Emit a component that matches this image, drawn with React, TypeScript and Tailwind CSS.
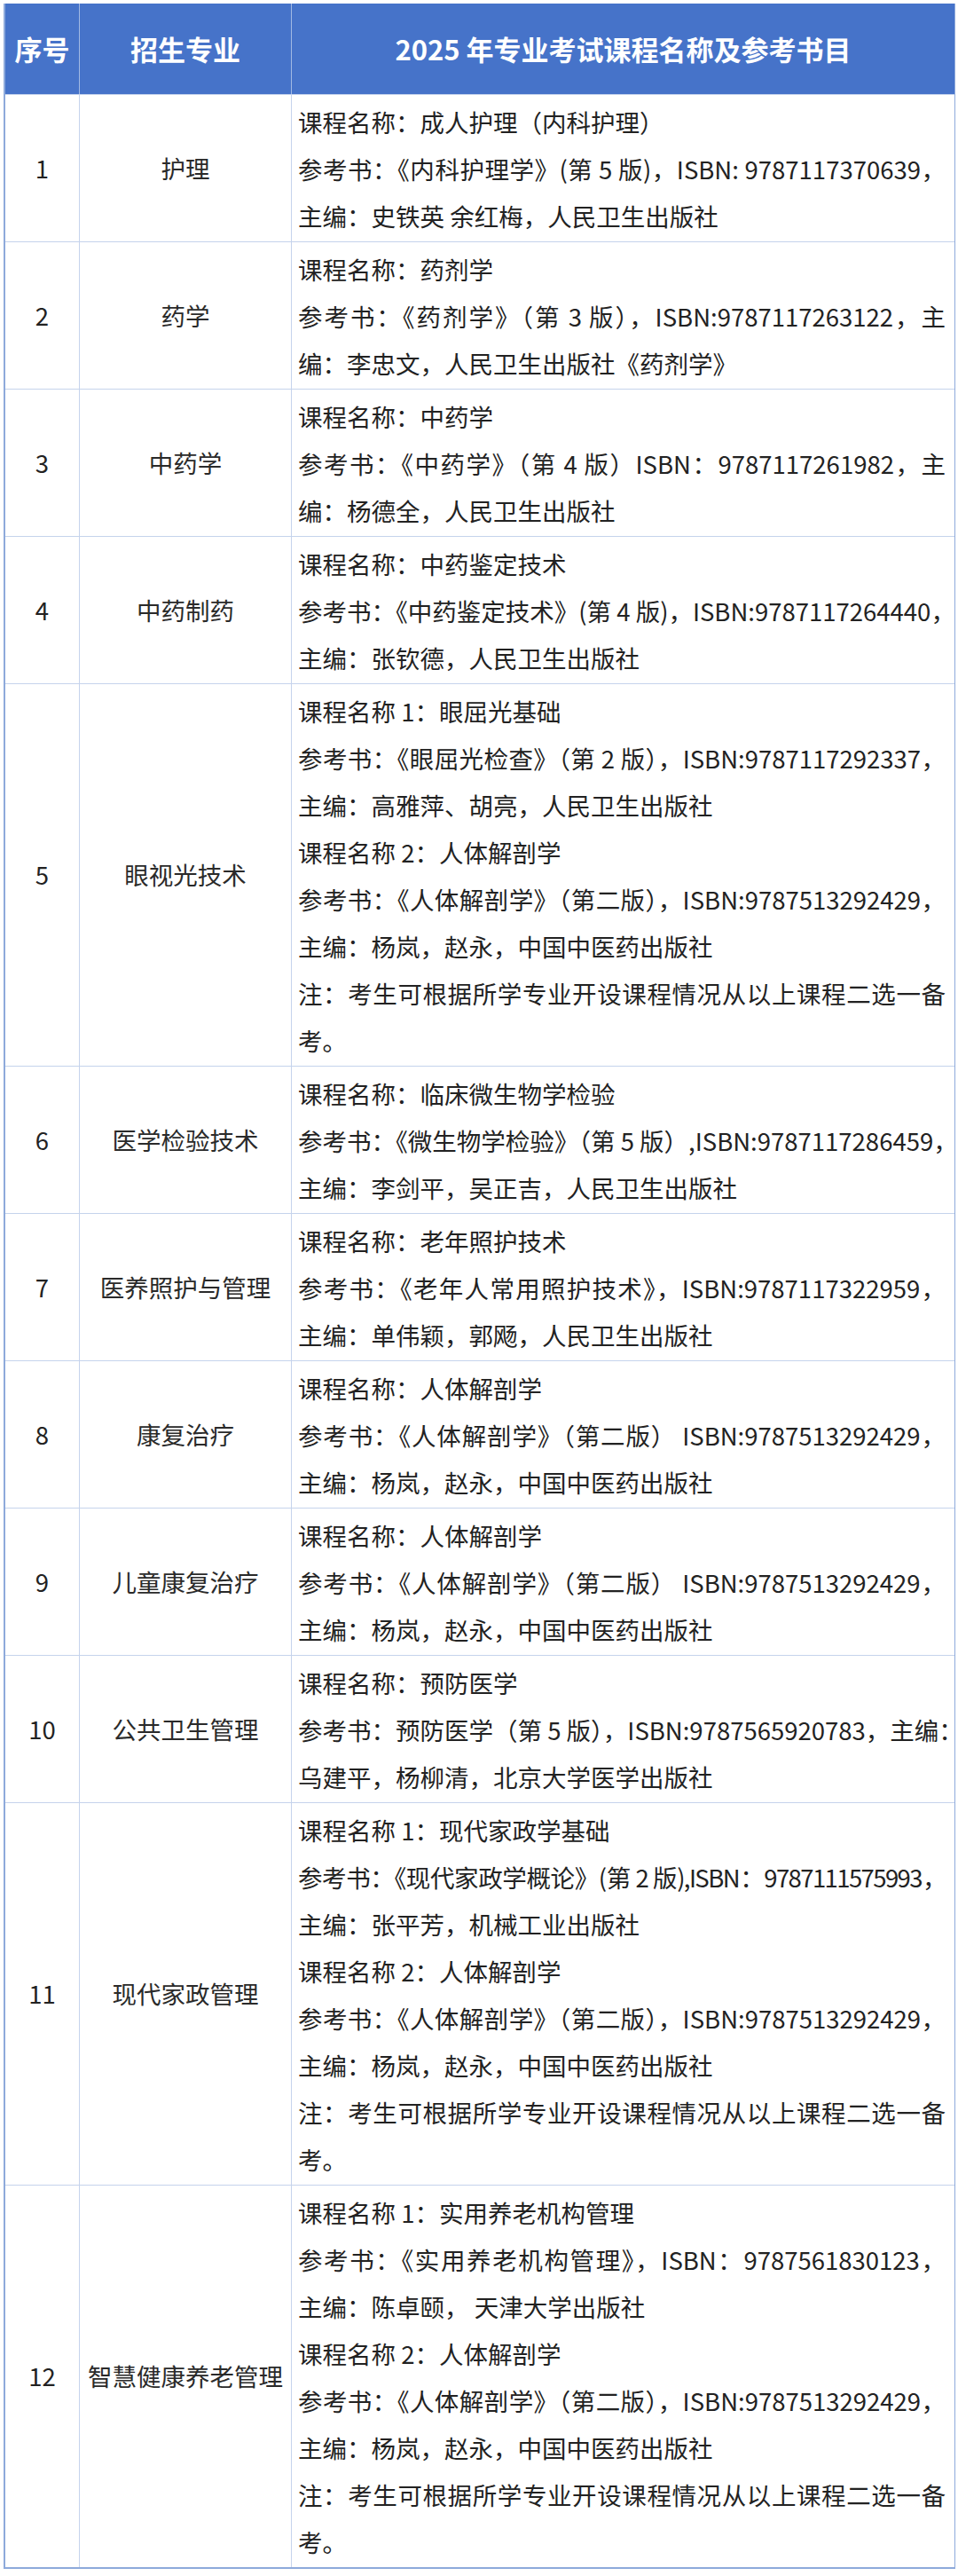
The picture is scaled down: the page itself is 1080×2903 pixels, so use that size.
import React from 'react';

type Line = { t: string; j?: boolean; tight?: boolean };

interface Row {
  no: string;
  major: string;
  lines: Line[];
}

const anatomy: Line[] = [
  { t: '课程名称 2：人体解剖学' },
  { t: '参考书：《人体解剖学》（第二版），ISBN:9787513292429，', j: true },
  { t: '主编：杨岚，赵永，中国中医药出版社' },
  { t: '注：考生可根据所学专业开设课程情况从以上课程二选一备', j: true },
  { t: '考。' },
];

const anatomySingle: Line[] = [
  { t: '课程名称：人体解剖学' },
  { t: '参考书：《人体解剖学》（第二版） ISBN:9787513292429，', j: true },
  { t: '主编：杨岚，赵永，中国中医药出版社' },
];

const rows: Row[] = [
  {
    no: '1',
    major: '护理',
    lines: [
      { t: '课程名称：成人护理（内科护理）' },
      { t: '参考书：《内科护理学》(第 5 版)，ISBN: 9787117370639，', j: true },
      { t: '主编：史铁英  余红梅，人民卫生出版社' },
    ],
  },
  {
    no: '2',
    major: '药学',
    lines: [
      { t: '课程名称：药剂学' },
      { t: '参考书：《药剂学》（第 3 版），ISBN:9787117263122，主', j: true },
      { t: '编：李忠文，人民卫生出版社《药剂学》' },
    ],
  },
  {
    no: '3',
    major: '中药学',
    lines: [
      { t: '课程名称：中药学' },
      { t: '参考书：《中药学》（第 4 版）ISBN：9787117261982，主', j: true },
      { t: '编：杨德全，人民卫生出版社' },
    ],
  },
  {
    no: '4',
    major: '中药制药',
    lines: [
      { t: '课程名称：中药鉴定技术' },
      { t: '参考书：《中药鉴定技术》(第 4 版)，ISBN:9787117264440，', j: true },
      { t: '主编：张钦德，人民卫生出版社' },
    ],
  },
  {
    no: '5',
    major: '眼视光技术',
    lines: [
      { t: '课程名称 1：眼屈光基础' },
      { t: '参考书：《眼屈光检查》（第 2 版），ISBN:9787117292337，', j: true },
      { t: '主编：高雅萍、胡亮，人民卫生出版社' },
      ...anatomy,
    ],
  },
  {
    no: '6',
    major: '医学检验技术',
    lines: [
      { t: '课程名称：临床微生物学检验' },
      { t: '参考书：《微生物学检验》（第 5 版）,ISBN:9787117286459，', j: true },
      { t: '主编：李剑平，吴正吉，人民卫生出版社' },
    ],
  },
  {
    no: '7',
    major: '医养照护与管理',
    lines: [
      { t: '课程名称：老年照护技术' },
      { t: '参考书：《老年人常用照护技术》，ISBN:9787117322959，', j: true },
      { t: '主编：单伟颖，郭飏，人民卫生出版社' },
    ],
  },
  { no: '8', major: '康复治疗', lines: anatomySingle },
  { no: '9', major: '儿童康复治疗', lines: anatomySingle },
  {
    no: '10',
    major: '公共卫生管理',
    lines: [
      { t: '课程名称：预防医学' },
      { t: '参考书：预防医学（第 5 版），ISBN:9787565920783，主编：', j: true },
      { t: '乌建平，杨柳清，北京大学医学出版社' },
    ],
  },
  {
    no: '11',
    major: '现代家政管理',
    lines: [
      { t: '课程名称 1：现代家政学基础' },
      { t: '参考书：《现代家政学概论》(第 2 版),ISBN：9787111575993，', j: true, tight: true },
      { t: '主编：张平芳，机械工业出版社' },
      ...anatomy,
    ],
  },
  {
    no: '12',
    major: '智慧健康养老管理',
    lines: [
      { t: '课程名称 1：实用养老机构管理' },
      { t: '参考书：《实用养老机构管理》，ISBN：9787561830123，', j: true },
      { t: '主编：陈卓颐， 天津大学出版社' },
      ...anatomy,
    ],
  },
];

const font = { fontFamily: '"Noto Sans CJK SC", "Noto Sans", sans-serif' };

function lineClass(line: Line) {
  if (line.tight) return 'whitespace-nowrap tracking-[-1.6px] [text-align-last:justify] text-justify';
  if (line.j) return 'whitespace-nowrap [text-align-last:justify] text-justify';
  return 'whitespace-nowrap';
}

export default function App() {
  return (
    <div className="min-h-screen bg-white pl-[4px] pt-[4px]" style={font}>
      <div className="w-[1073px] border-b-2 border-l-2 border-r border-[#8eaadb]">
        {/* header */}
        <div className="grid h-[102px] grid-cols-[84px_239px_minmax(0,1fr)] bg-[#4673c9] text-[31px] font-bold text-white">
          <div className="flex items-center justify-center border-r border-[#a3b9e4]">序号</div>
          <div className="flex items-center justify-center border-r border-[#a3b9e4]">招生专业</div>
          <div className="flex items-center justify-center">2025 年专业考试课程名称及参考书目</div>
        </div>

        {rows.map((row) => (
          <div
            key={row.no}
            className="grid grid-cols-[84px_239px_minmax(0,1fr)] border-t border-[#c5d3ec] text-[27.5px] text-[#222]"
          >
            <div className="flex items-center justify-center border-r border-[#c5d3ec]">{row.no}</div>
            <div className="flex items-center justify-center border-r border-[#c5d3ec] text-[#2a2a2a]">
              {row.major}
            </div>
            <div className="min-w-0 pb-[2px] pl-[7px] pr-[10px] pt-[4px] leading-[53px]">
              {row.lines.map((line, i) => (
                <div key={i} className={lineClass(line)}>
                  {line.t}
                </div>
              ))}
            </div>
          </div>
        ))}
      </div>
    </div>
  );
}
